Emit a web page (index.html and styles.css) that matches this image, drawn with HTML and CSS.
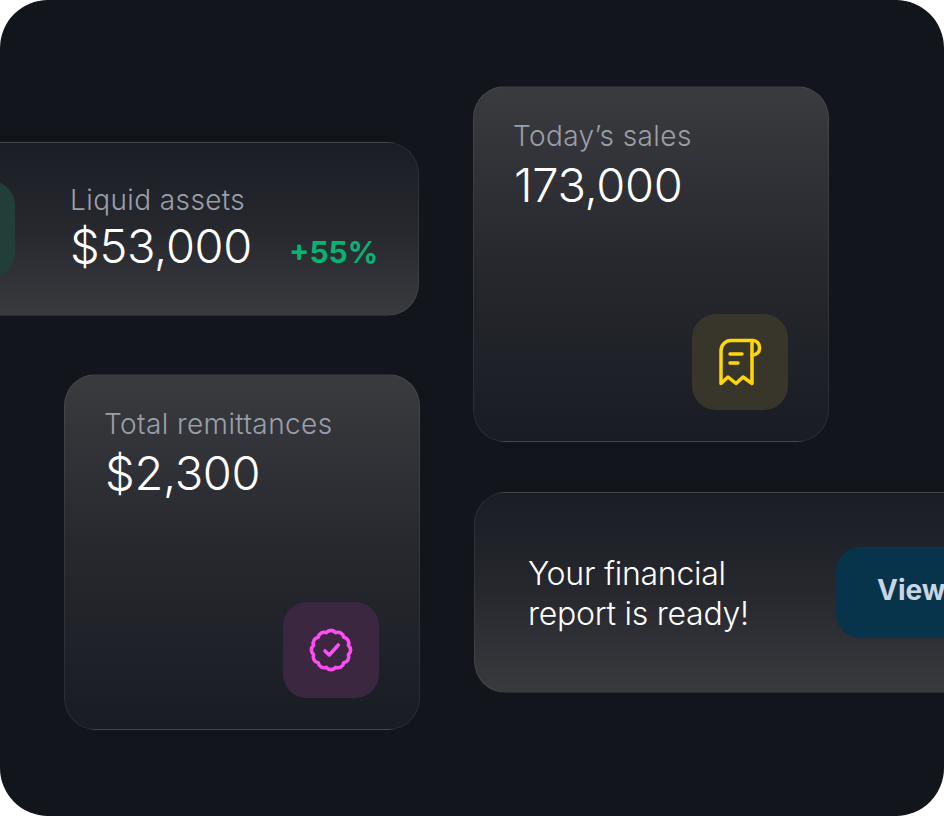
FILE: index.html
```html
<!DOCTYPE html>
<html lang="en">
<head>
    <meta charset="UTF-8" />
    <title>Finance cards</title>
    <link rel="stylesheet" href="styles.css">
</head>
<body>
    <div class="canvas">
        <div class="card card-wide card-up card-assets">
            <div class="tile tile-green"></div>
            <div class="stat">
                <p class="stat-label">Liquid assets</p>
                <p class="stat-value">$53,000</p>
            </div>
            <span class="change">+55%</span>
        </div>

        <div class="card card-square card-down card-sales">
            <p class="stat-label">Today’s sales</p>
            <p class="stat-value">173,000</p>
            <div class="tile tile-yellow">
                <svg width="48" height="48" viewBox="0 0 48 48" fill="none" stroke="#ffd60a" stroke-width="3.500" stroke-linecap="round" stroke-linejoin="round">
                    <path d="M37 2.500H15A10 10 0 0 0 5 12.500V45.500L12 39 20 45.500 27 39 36 45.500V4"/>
                    <path d="M37 2.500a6.500 7 0 0 1 6.500 7v1a6.500 6.500 0 0 1-6.500 6.500h-1"/>
                    <path d="M14 16h12M14 25h8"/>
                </svg>
            </div>
        </div>

        <div class="card card-square card-down card-total">
            <p class="stat-label">Total remittances</p>
            <p class="stat-value">$2,300</p>
            <div class="tile tile-pink">
                <svg width="48" height="48" viewBox="0 0 48 48" fill="none" stroke="#ff4df5" stroke-width="3.600" stroke-linecap="round" stroke-linejoin="round">
                    <path d="M28.660 6.610A6 6 0 0 1 36.730 11.270A6 6 0 0 1 41.390 19.340A6 6 0 0 1 41.390 28.660A6 6 0 0 1 36.730 36.730A6 6 0 0 1 28.660 41.390A6 6 0 0 1 19.340 41.390A6 6 0 0 1 11.270 36.730A6 6 0 0 1 6.610 28.660A6 6 0 0 1 6.610 19.340A6 6 0 0 1 11.270 11.270A6 6 0 0 1 19.340 6.610A6 6 0 0 1 28.660 6.610Z"/>
                    <path d="M18 25l4.300 4 9-10"/>
                </svg>
            </div>
        </div>

        <div class="card card-wide card-up card-report">
            <p class="report-text">Your financial<br>report is ready!</p>
            <button class="view-btn">View report</button>
        </div>
    </div>
</body>
</html>
```

FILE: styles.css
```css
* {
    box-sizing: border-box;
    margin: 0;
    padding: 0;
}
html, body {
    width: 944px;
    height: 816px;
    overflow: hidden;
    background: #fff;
}
body {
    font-family: 'Inter', 'Liberation Sans', sans-serif;
}
.canvas {
    position: relative;
    width: 944px;
    height: 816px;
    background: #12151c;
    border-radius: 48px;
    overflow: hidden;
}
.card {
    position: absolute;
    border: 1px solid rgba(255, 255, 255, 0.07);
    border-radius: 32px;
}
.card-up {
    background: linear-gradient(180deg, #1a1d24 0%, #26282e 50%, #393a3e 100%);
}
.card-down {
    background: linear-gradient(180deg, #3a3b3f 0%, #26282e 50%, #191c23 100%);
}
.card-wide {
    display: flex;
    align-items: center;
}
.card-square {
    width: 356px;
    height: 356px;
    padding: 31px 39px;
}
.card-square .stat-value {
    margin: 3px 0 0 1px;
}
.card-assets {
    left: -100px;
    top: 142px;
    width: 519px;
    height: 174px;
}
.card-sales {
    left: 473px;
    top: 86px;
}
.card-total {
    left: 64px;
    top: 374px;
}
.card-report {
    left: 474px;
    top: 492px;
    width: 600px;
    height: 201px;
}
.stat-label {
    font-size: 28px;
    font-weight: 300;
    line-height: 36px;
    color: #9a9fa9;
    letter-spacing: 0.4px;
}
.stat-value {
    font-size: 47px;
    font-weight: 300;
    line-height: 56px;
    color: #fff;
    letter-spacing: -0.3px;
}
.tile {
    position: absolute;
    right: 40px;
    bottom: 31px;
    width: 96px;
    height: 96px;
    border-radius: 24px;
    display: flex;
    align-items: center;
    justify-content: center;
}
.tile-yellow {
    background: #38352a;
}
.tile-pink {
    background: #3b2840;
}
.tile-green {
    left: 18px;
    right: auto;
    top: 38px;
    bottom: auto;
    background: #213f38;
}
.stat {
    margin: 0 0 2px 169px;
}
.change {
    margin: 46px 0 0 37px;
    font-size: 30px;
    font-weight: 700;
    color: #05b372;
}
.report-text {
    margin: 2px 0 0 53px;
    font-size: 32px;
    font-weight: 300;
    line-height: 40px;
    color: #fff;
    letter-spacing: -0.25px;
    white-space: nowrap;
}
.view-btn {
    position: absolute;
    left: 361px;
    top: 54px;
    width: 220px;
    height: 91px;
    border: none;
    border-radius: 24px;
    background: #07344a;
    color: #cbd5e1;
    font-family: inherit;
    font-size: 28px;
    font-weight: 700;
    text-align: left;
    padding: 0 0 6px 41px;
    white-space: nowrap;
}
```
